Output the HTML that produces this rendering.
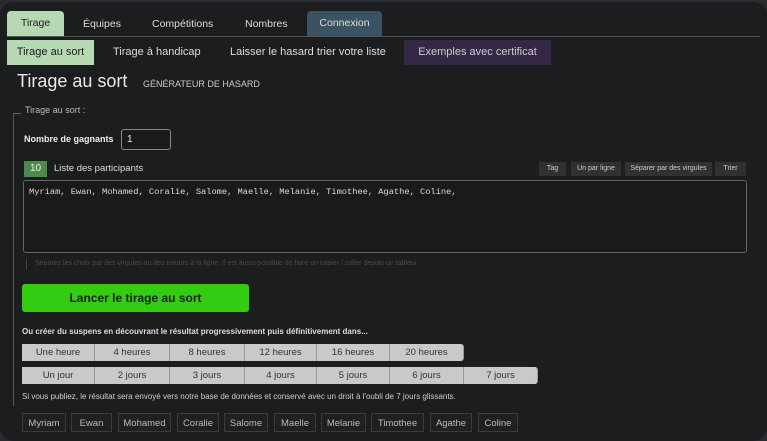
<!DOCTYPE html>
<html><head><meta charset="utf-8"><style>
*{box-sizing:border-box;margin:0;padding:0}
body{width:767px;height:441px;background:#2a2b2e;font-family:"Liberation Sans",sans-serif;overflow:hidden;position:relative}
#pg{position:absolute;left:0;top:0;width:767px;height:441px;background:#1c1d1e;border-radius:14px;border-top:2px solid #2c2d30;overflow:hidden}
.a{position:absolute;white-space:nowrap}
.t{color:#ddd;font-size:11px}
.btn{position:absolute;background:#c9c9c9;color:#333;font-size:9.5px;text-align:center;border-right:1px solid #999;height:17px;line-height:17px}
.sm{position:absolute;background:#2f3133;color:#ccc;font-size:7px;height:14px;line-height:14px;text-align:center}
.tag{position:absolute;top:411px;height:19px;line-height:19px;border:1px solid #3a3b3d;background:#1f2021;color:#bbb;font-size:9.5px;text-align:center}
</style></head><body><div id="pg">
<div class="a" style="left:7px;top:9px;width:57px;height:25px;background:#b6d8b3;border-radius:4px 4px 0 0;color:#1c1c1c;font-size:10.5px;text-align:center;line-height:25px">Tirage</div>
<div class="a t" style="left:83px;top:16px;font-size:10.5px">Équipes</div>
<div class="a t" style="left:152px;top:16px;font-size:10.5px">Compétitions</div>
<div class="a t" style="left:245px;top:16px;font-size:10.5px">Nombres</div>
<div class="a" style="left:307px;top:9px;width:75px;height:25px;background:#3b5263;border-radius:4px 4px 0 0;color:#ddd;font-size:10.5px;text-align:center;line-height:25px">Connexion</div>
<div class="a" style="left:7px;top:34px;width:753px;height:1px;background:#555"></div>
<div class="a" style="left:7px;top:38px;width:87px;height:25px;background:#b6d8b3;color:#1c1c1c;font-size:11px;text-align:center;line-height:25px">Tirage au sort</div>
<div class="a t" style="left:113px;top:44px">Tirage à handicap</div>
<div class="a t" style="left:230px;top:44px">Laisser le hasard trier votre liste</div>
<div class="a" style="left:404px;top:38px;width:147px;height:25px;background:#352845;color:#ccc;font-size:11px;text-align:center;line-height:25px">Exemples avec certificat</div>
<div class="a" style="left:17px;top:69px;color:#e8e8e8;font-size:18px">Tirage au sort</div>
<div class="a" style="left:143px;top:77px;color:#ccc;font-size:9px">GÉNÉRATEUR DE HASARD</div>
<div class="a" style="left:13px;top:111px;width:8px;height:1px;background:#666"></div>
<div class="a" style="left:13px;top:111px;width:1px;height:293px;background:#555"></div>
<div class="a" style="left:25px;top:103px;color:#bbb;font-size:9px">Tirage au sort :</div>
<div class="a" style="left:24px;top:132px;color:#eee;font-size:9px;font-weight:bold">Nombre de gagnants</div>
<div class="a" style="left:121px;top:127px;width:50px;height:21px;border:1px solid #888;border-radius:3px;background:#1a1a1a;color:#eee;font-size:10px;padding:4px 5px">1</div>
<div class="a" style="left:24px;top:159px;width:23px;height:16px;background:#4e8a4c;color:#eee;font-size:10px;text-align:center;line-height:16px">10</div>
<div class="a" style="left:54px;top:161px;color:#ddd;font-size:9.5px">Liste des participants</div>
<div class="sm" style="left:539px;top:160px;width:27px">Tag</div>
<div class="sm" style="left:571px;top:160px;width:50px">Un par ligne</div>
<div class="sm" style="left:625px;top:160px;width:87px">Séparer par des virgules</div>
<div class="sm" style="left:715px;top:160px;width:31px">Trier</div>
<div class="a" style="left:23px;top:178px;width:724px;height:73px;border:1px solid #666;border-radius:3px;background:#1a1a1a;color:#ddd;font-family:'Liberation Mono',monospace;font-size:8.7px;padding:6px 5px">Myriam, Ewan, Mohamed, Coralie, Salome, Maelle, Melanie, Timothee, Agathe, Coline,</div>
<div class="a" style="left:26px;top:257px;width:1px;height:11px;background:#444"></div>
<div class="a" style="left:35px;top:258px;color:#4a4b4d;font-size:7px">Séparez les choix par des virgules ou des retours à la ligne. Il est aussi possible de faire un copier / coller depuis un tableur.</div>
<div class="a" style="left:22px;top:282px;width:227px;height:28px;background:#33cc12;border-radius:3px;color:#152010;font-weight:bold;font-size:12px;text-align:center;line-height:28px">Lancer le tirage au sort</div>
<div class="a" style="left:22px;top:325px;color:#ddd;font-size:8px;font-weight:bold">Ou créer du suspens en découvrant le résultat progressivement puis définitivement dans...</div>
<div class="btn" style="left:22px;top:342px;width:73px">Une heure</div>
<div class="btn" style="left:95px;top:342px;width:75px">4 heures</div>
<div class="btn" style="left:170px;top:342px;width:75px">8 heures</div>
<div class="btn" style="left:245px;top:342px;width:72px">12 heures</div>
<div class="btn" style="left:317px;top:342px;width:73px">16 heures</div>
<div class="btn" style="left:390px;top:342px;width:74px;border-radius:0 3px 3px 0">20 heures</div>
<div class="btn" style="left:22px;top:365px;width:73px">Un jour</div>
<div class="btn" style="left:95px;top:365px;width:75px">2 jours</div>
<div class="btn" style="left:170px;top:365px;width:75px">3 jours</div>
<div class="btn" style="left:245px;top:365px;width:72px">4 jours</div>
<div class="btn" style="left:317px;top:365px;width:73px">5 jours</div>
<div class="btn" style="left:390px;top:365px;width:74px">6 jours</div>
<div class="btn" style="left:464px;top:365px;width:74px;border-radius:0 3px 3px 0">7 jours</div>
<div class="a" style="left:22px;top:390px;color:#ccc;font-size:8px">Si vous publiez, le résultat sera envoyé vers notre base de données et conservé avec un droit à l'oubli de 7 jours glissants.</div>
<div class="tag" style="left:22px;width:44px">Myriam</div>
<div class="tag" style="left:71px;width:41px">Ewan</div>
<div class="tag" style="left:118px;width:53px">Mohamed</div>
<div class="tag" style="left:177px;width:42px">Coralie</div>
<div class="tag" style="left:224px;width:44px">Salome</div>
<div class="tag" style="left:274px;width:42px">Maelle</div>
<div class="tag" style="left:321px;width:45px">Melanie</div>
<div class="tag" style="left:371px;width:53px">Timothee</div>
<div class="tag" style="left:430px;width:42px">Agathe</div>
<div class="tag" style="left:478px;width:40px">Coline</div>
</div></body></html>
